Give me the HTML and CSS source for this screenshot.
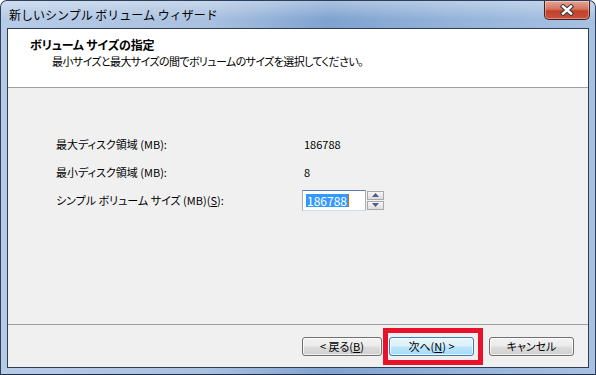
FILE: index.html
```html
<!DOCTYPE html>
<html lang="ja">
<head>
<meta charset="utf-8">
<title>新しいシンプル ボリューム ウィザード</title>
<link rel="stylesheet" href="styles.css">
</head>
<body>
<div class="window">
  <div class="titlebar">
    <span class="title">新しいシンプル ボリューム ウィザード</span>
    <button class="close" aria-label="閉じる">
      <svg width="16" height="12" viewBox="0 0 16 12">
        <path d="M4 2.5 L12 9.5 M12 2.5 L4 9.5" stroke="#3a3a3a" stroke-width="4.4" stroke-linecap="square" fill="none"/>
        <path d="M4 2.5 L12 9.5 M12 2.5 L4 9.5" stroke="#ffffff" stroke-width="2.4" stroke-linecap="square" fill="none"/>
      </svg>
    </button>
  </div>
  <div class="client">
    <div class="header">
      <div class="h-title">ボリューム サイズの指定</div>
      <div class="h-sub">最小サイズと最大サイズの間でボリュームのサイズを選択してください。</div>
    </div>
    <div class="body">
      <div class="row">
        <span class="label">最大ディスク領域 (MB):</span>
        <span class="value">186788</span>
      </div>
      <div class="row">
        <span class="label">最小ディスク領域 (MB):</span>
        <span class="value">8</span>
      </div>
      <div class="row">
        <span class="label">シンプル ボリューム サイズ (MB)(<u>S</u>):</span>
        <div class="spin">
          <div class="spin-field"><span class="sel">186788</span><span class="caret"></span></div>
          <div class="spin-btns">
            <div class="spin-btn"><svg width="7" height="4" viewBox="0 0 7 4"><path d="M0 4 L3.5 0 L7 4 Z" fill="#4a5d8c"/></svg></div>
            <div class="spin-btn"><svg width="7" height="4" viewBox="0 0 7 4"><path d="M0 0 L3.5 4 L7 0 Z" fill="#4a5d8c"/></svg></div>
          </div>
        </div>
      </div>
    </div>
    <div class="footer">
      <button class="btn btn-back">&lt; 戻る(<u>B</u>)</button>
      <div class="highlight"><button class="btn btn-default">次へ(<u>N</u>) &gt;</button></div>
      <button class="btn">キャンセル</button>
    </div>
  </div>
</div>
</body>
</html>
```
FILE: styles.css
```css
html, body {
  margin: 0;
  padding: 0;
  background: #ffffff;
}
body {
  font-family: "Noto Sans CJK JP", "Noto Sans", sans-serif;
  font-size: 11px;
  font-feature-settings: "palt";
  color: #000;
}
.window {
  width: 596px;
  height: 375px;
  box-sizing: border-box;
  border-radius: 7px 7px 0 0;
  border: 1px solid #2c3f5c;
  border-bottom-color: #1e2c44;
  background:
    linear-gradient(90deg, #b6cbe6 0%, #a9c1e0 35%, #7fa2d0 55%, #93b2d9 75%, #a7c1e2 100%);
  display: flex;
  flex-direction: column;
  overflow: hidden;
}
.titlebar {
  height: 27px;
  display: flex;
  align-items: flex-start;
  justify-content: space-between;
  padding-left: 8px;
  padding-right: 5px;
  background: linear-gradient(180deg, rgba(255,255,255,0.35), rgba(255,255,255,0) 70%);
}
.title {
  font-size: 12px;
  font-feature-settings: normal;
  line-height: 28px;
  color: #000;
}
.close {
  width: 46px;
  height: 19px;
  border: 1px solid #4a1f1a;
  border-top: none;
  border-radius: 0 0 5px 5px;
  background: linear-gradient(180deg, #e5a695 0%, #d4735f 45%, #c2412b 55%, #c9523c 100%);
  box-shadow: inset 0 0 0 1px rgba(255,255,255,0.35);
  padding: 0;
  display: flex;
  align-items: center;
  justify-content: center;
}
.client {
  flex: 1;
  margin: 0 6px 6px 6px;
  border: 1px solid #2f3c52;
  background: #f0f0f0;
  display: flex;
  flex-direction: column;
}
.header {
  height: 59px;
  background: #ffffff;
  border-bottom: 1px solid #a0a0a0;
  box-sizing: border-box;
  padding: 8px 0 0 22px;
}
.h-title {
  font-size: 12px;
  font-weight: bold;
  line-height: 16px;
  letter-spacing: -0.2px;
}
.h-sub {
  line-height: 16px;
  padding-left: 22px;
  letter-spacing: -0.6px;
}
.body {
  flex: 1;
  padding: 48px 0 0 48px;
  display: flex;
  flex-direction: column;
  gap: 12px;
}
.row {
  display: flex;
  align-items: center;
  height: 16px;
}
.label {
  width: 248px;
}
.spin {
  display: flex;
  align-items: flex-start;
  margin-left: -2px;
}
.spin-field {
  width: 64px;
  height: 21px;
  box-sizing: border-box;
  border: 1px solid #abadb3;
  border-top-color: #5c7fb3;
  border-bottom-color: #c9def2;
  background: #fff;
  display: flex;
  align-items: center;
  padding-left: 3px;
}
.sel {
  background: #3399ff;
  color: #fff;
  line-height: 13px;
  padding: 0 1px;
  font-size: 12px;
}
.caret {
  width: 1px;
  height: 13px;
  background: #d86b00;
}
.spin-btns {
  margin-left: 1px;
  margin-top: 1px;
  display: flex;
  flex-direction: column;
  gap: 1px;
}
.spin-btn {
  width: 17px;
  height: 9px;
  box-sizing: border-box;
  border: 1px solid #a9a9a9;
  background: linear-gradient(180deg, #f6f6f6, #dedede);
  display: flex;
  align-items: center;
  justify-content: center;
}
.footer {
  height: 43px;
  border-top: 1px solid #a0a0a0;
  box-sizing: border-box;
  display: flex;
  align-items: center;
  padding-left: 294px;
  padding-top: 1px;
}
.btn {
  font: inherit;
  font-size: 11px;
  font-feature-settings: "palt";
  width: 85px;
  height: 19px;
  box-sizing: border-box;
  border: 1px solid #707070;
  border-radius: 3px;
  background: linear-gradient(180deg, #f2f2f2 0%, #ebebeb 48%, #dddddd 52%, #cfcfcf 100%);
  box-shadow: inset 0 0 0 1px rgba(255,255,255,0.7);
  padding: 0;
  line-height: 15px;
  color: #000;
}
.btn-back {
  width: 80px;
}
.highlight {
  margin-left: 1px;
  border: 5px solid #e8132a;
  padding: 4px 4px 4px 1px;
  margin-right: 6px;
}
.btn-default {
  border-color: #3c7fb1;
  background: linear-gradient(180deg, #eaf6fd 0%, #d9f0fc 48%, #bee6fd 52%, #a7d9f5 100%);
}
```
